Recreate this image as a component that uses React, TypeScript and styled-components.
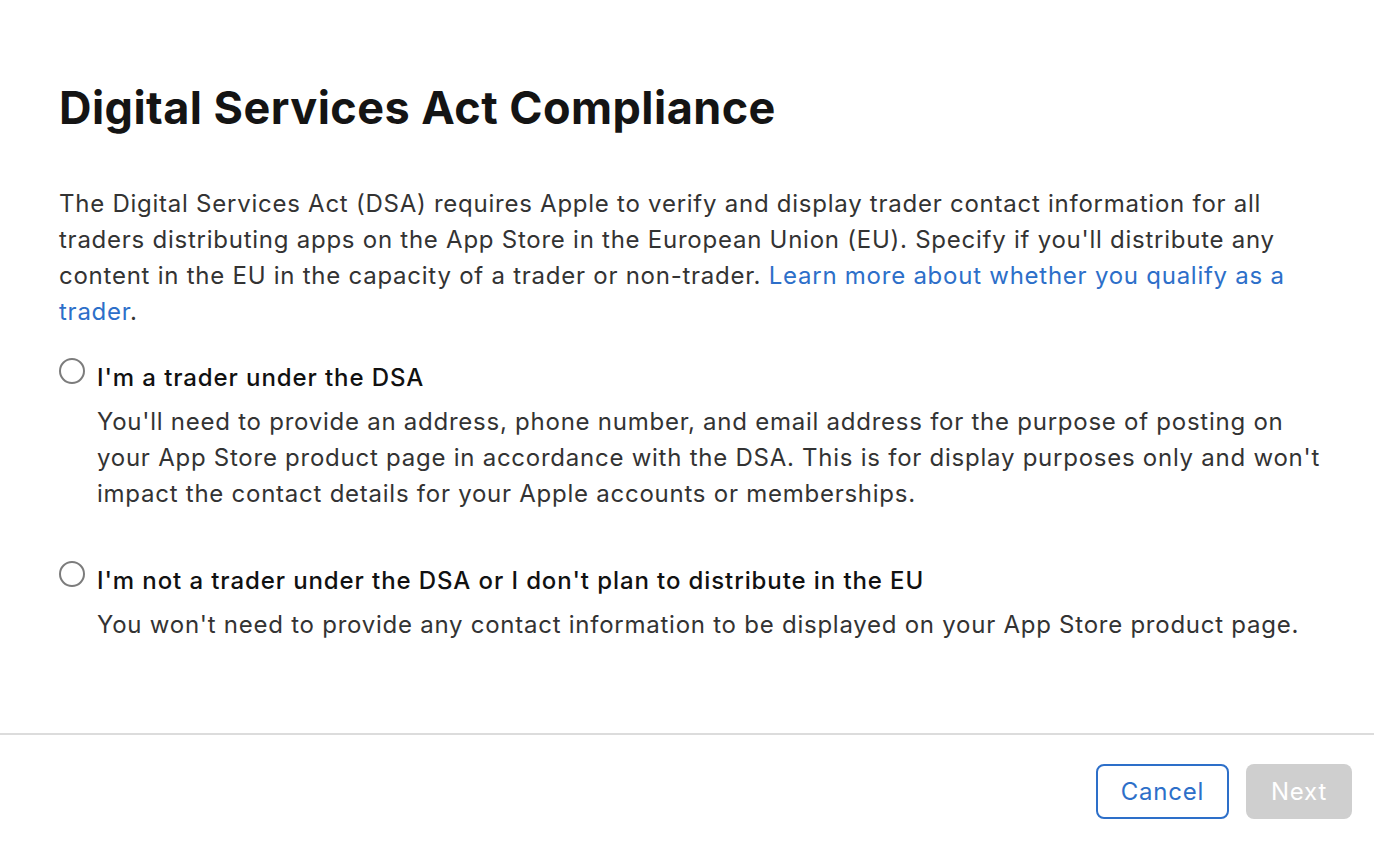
import styled, { createGlobalStyle } from "styled-components";
import { useState } from "react";

const GlobalStyle = createGlobalStyle`
  html, body {
    margin: 0;
    padding: 0;
    background: #fff;
  }
  body {
    font-family: Inter, "Noto Sans", "Liberation Sans", sans-serif;
    -webkit-font-smoothing: antialiased;
  }
`;

const OPTIONS = [
  {
    id: "trader",
    label: "I'm a trader under the DSA",
    text: "You'll need to provide an address, phone number, and email address for the purpose of posting on your App Store product page in accordance with the DSA. This is for display purposes only and won't impact the contact details for your Apple accounts or memberships.",
  },
  {
    id: "non-trader",
    label: "I'm not a trader under the DSA or I don't plan to distribute in the EU",
    text: "You won't need to provide any contact information to be displayed on your App Store product page.",
  },
];

export default function App() {
  const [choice, setChoice] = useState<string | null>(null);

  return (
    <>
      <GlobalStyle />
      <Dialog>
        <Body>
          <Title>Digital Services Act Compliance</Title>
          <Intro>
            The Digital Services Act (DSA) requires Apple to verify and display trader contact
            information for all traders distributing apps on the App Store in the European Union
            (EU). Specify if you'll distribute any content in the EU in the capacity of a trader or
            non-trader. <Link href="#">Learn more about whether you qualify as a trader</Link>.
          </Intro>
          <Options>
            {OPTIONS.map((o) => (
              <Option key={o.id}>
                <Radio
                  type="radio"
                  name="dsa"
                  checked={choice === o.id}
                  onChange={() => setChoice(o.id)}
                />
                <OptionBody>
                  <OptionLabel>{o.label}</OptionLabel>
                  <OptionText>{o.text}</OptionText>
                </OptionBody>
              </Option>
            ))}
          </Options>
        </Body>
        <Footer>
          <Button $variant="secondary">Cancel</Button>
          <Button $variant="primary" disabled={!choice}>
            Next
          </Button>
        </Footer>
      </Dialog>
    </>
  );
}

const Dialog = styled.div`
  display: flex;
  flex-direction: column;
  min-height: 846px;
`;

const Body = styled.div`
  flex: 1;
  padding: 80px 45px 0 59px;
`;

const Title = styled.h1`
  margin: 0;
  font-size: 45px;
  line-height: 56px;
  font-weight: 700;
  color: #141414;
  letter-spacing: 0.45px;
`;

const Intro = styled.p`
  margin: 50px 0 0;
  font-size: 24px;
  line-height: 36px;
  letter-spacing: 0.75px;
  color: #333;
`;

const Link = styled.a`
  color: #2d6fc9;
  text-decoration: none;
`;

const Options = styled.div`
  display: flex;
  flex-direction: column;
  gap: 51px;
  margin-top: 30px;
`;

const Option = styled.label`
  display: flex;
  align-items: flex-start;
  gap: 12px;
  cursor: pointer;
`;

const Radio = styled.input`
  appearance: none;
  flex: none;
  width: 26px;
  height: 26px;
  margin: -2px 0 0;
  border: 2px solid #7c7c7c;
  border-radius: 50%;
  background: #fff;

  &:checked {
    border: 8px solid #0071e3;
  }
`;

const OptionBody = styled.div`
  display: flex;
  flex-direction: column;
  gap: 8px;
`;

const OptionLabel = styled.span`
  font-size: 24px;
  line-height: 36px;
  font-weight: 500;
  letter-spacing: 0.9px;
  color: #111;
`;

const OptionText = styled.span`
  font-size: 24px;
  line-height: 36px;
  letter-spacing: 0.75px;
  color: #333;
`;

const Footer = styled.div`
  display: flex;
  justify-content: flex-end;
  gap: 17px;
  border-top: 2px solid #dcdcdc;
  padding: 29px 22px 27px;
`;

const Button = styled.button<{ $variant: "primary" | "secondary" }>`
  height: 55px;
  padding: 0 23px;
  border-radius: 8px;
  font-family: inherit;
  font-size: 24px;
  letter-spacing: 0.75px;
  cursor: pointer;
  border: 2px solid ${(p) => (p.$variant === "secondary" ? "#2d6fc9" : "transparent")};
  background: ${(p) => (p.$variant === "secondary" ? "#fff" : "#0071e3")};
  color: ${(p) => (p.$variant === "secondary" ? "#2d6fc9" : "#fff")};

  &:disabled {
    background: #cfcfcf;
    color: #fff;
    cursor: default;
  }
`;
